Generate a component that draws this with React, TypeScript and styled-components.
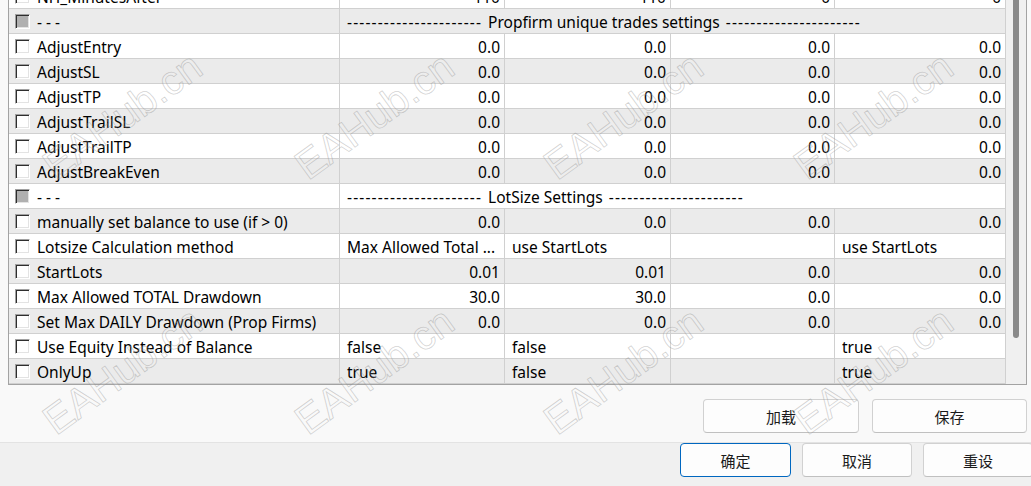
import React from "react";
import styled, { createGlobalStyle } from "styled-components";

const Global = createGlobalStyle`
  html, body { margin: 0; padding: 0; background: #f0f0f0; }
  #root { width: 1031px; height: 486px; }
`;

const Window = styled.div`
  position: relative;
  width: 1031px;
  height: 486px;
  overflow: hidden;
  font-family: "Noto Sans", "Noto Sans CJK SC", sans-serif;
  color: #000;
`;

const Upper = styled.div`
  box-sizing: border-box;
  height: 443px;
  padding: 0 4px 0 8px;
  background: #f9f9f9;
  border-bottom: 1px solid #e3e3e3;
  display: flex;
  flex-direction: column;
`;

const Frame = styled.div`
  margin-top: -17px;
  display: flex;
  border: 1px solid #a3a3a3;
  background: #fff;
`;

const Rows = styled.div`
  width: 997px;
  display: flex;
  flex-direction: column;
`;

const Row = styled.div<{ $alt: boolean }>`
  display: grid;
  grid-template-columns: 331px 165px 166px 164px 171px;
  height: 25px;
  box-sizing: border-box;
  border-bottom: 1px solid #d0d0d0;
  background: ${(p) => (p.$alt ? "#ebebeb" : "#ffffff")};
`;

const Cell = styled.div<{ $right?: boolean; $span?: boolean }>`
  box-sizing: border-box;
  border-right: 1px solid #d0d0d0;
  display: flex;
  align-items: center;
  justify-content: ${(p) => (p.$right ? "flex-end" : "flex-start")};
  padding: 1px 4px 0 7px;
  font-size: 15.5px;
  line-height: 24px;
  white-space: pre;
  overflow: hidden;
  ${(p) => (p.$span ? "grid-column: 2 / 6;" : "")}
`;

const NameCell = styled(Cell)`
  padding-left: 6px;
  gap: 7px;
`;

const Dashes = styled.span`
  letter-spacing: 1.15px;
`;

const Title = styled.span`
  margin: 0 6px 0 6px;
`;

const Check = styled.span<{ $disabled?: boolean }>`
  flex: none;
  box-sizing: border-box;
  width: 15px;
  height: 15px;
  margin-top: -1px;
  border: 1px solid;
  border-color: #a0a0a0 #ffffff #ffffff #a0a0a0;
  box-shadow: inset 1px 1px 0 #2e2e2e, inset -1px -1px 0 #e3e3e3;
  background: ${(p) => (p.$disabled ? "#b0b0b0" : "#ffffff")};
`;

const Scrollbar = styled.div`
  width: 20px;
  box-sizing: border-box;
  background: #f0f0f0;
  display: flex;
  padding-left: 7px;
`;

const Thumb = styled.div`
  width: 6px;
  height: 354px;
  background: #8a8a8a;
  border-radius: 0 0 3px 3px;
`;

const UpperButtons = styled.div`
  display: flex;
  justify-content: flex-end;
  gap: 13px;
  margin-top: 14px;
`;

const Button = styled.button<{ $w: number; $primary?: boolean }>`
  box-sizing: border-box;
  width: ${(p) => p.$w}px;
  height: 34px;
  border-radius: 4px;
  border: 1px solid ${(p) => (p.$primary ? "#0067c0" : "#d1d1d1")};
  border-bottom-color: ${(p) => (p.$primary ? "#0067c0" : "#c0c0c0")};
  background: #fdfdfd;
  font-family: "Noto Sans CJK SC", sans-serif;
  font-size: 15px;
  color: #1b1b1b;
  padding: 0;
  display: flex;
  align-items: center;
  justify-content: center;
`;

const Lower = styled.div`
  display: flex;
  justify-content: flex-end;
  gap: 11px;
  margin-right: -2px;
`;

const Watermark = styled.span`
  position: absolute;
  font-family: "Liberation Sans", sans-serif;
  font-size: 41px;
  line-height: 1;
  color: rgba(255, 255, 255, 0.15);
  -webkit-text-stroke: 0.8px rgba(140, 140, 140, 0.4);
  transform: rotate(-36deg);
  transform-origin: 0 100%;
  pointer-events: none;
  white-space: nowrap;
`;

type DataRow =
  | { kind: "sep"; title: string }
  | { kind: "val"; name: string; vals: string[]; right: boolean };

const z4 = ["0.0", "0.0", "0.0", "0.0"];
const dashes = "----------------------";

const rows: DataRow[] = [
  { kind: "val", name: "NH_MinutesAfter", vals: ["110", "110", "0", "0"], right: true },
  { kind: "sep", title: "Propfirm unique trades settings" },
  { kind: "val", name: "AdjustEntry", vals: z4, right: true },
  { kind: "val", name: "AdjustSL", vals: z4, right: true },
  { kind: "val", name: "AdjustTP", vals: z4, right: true },
  { kind: "val", name: "AdjustTrailSL", vals: z4, right: true },
  { kind: "val", name: "AdjustTrailTP", vals: z4, right: true },
  { kind: "val", name: "AdjustBreakEven", vals: z4, right: true },
  { kind: "sep", title: "LotSize Settings" },
  { kind: "val", name: "manually set balance to use (if > 0)", vals: z4, right: true },
  {
    kind: "val",
    name: "Lotsize Calculation method",
    vals: ["Max Allowed Total ...", "use StartLots", "", "use StartLots"],
    right: false,
  },
  { kind: "val", name: "StartLots", vals: ["0.01", "0.01", "0.0", "0.0"], right: true },
  { kind: "val", name: "Max Allowed TOTAL Drawdown", vals: ["30.0", "30.0", "0.0", "0.0"], right: true },
  { kind: "val", name: "Set Max DAILY Drawdown (Prop Firms)", vals: z4, right: true },
  { kind: "val", name: "Use Equity Instead of Balance", vals: ["false", "false", "", "true"], right: false },
  { kind: "val", name: "OnlyUp", vals: ["true", "false", "", "true"], right: false },
];

const marks: [number, number][] = [
  [46, 175], [298, 175], [547, 175], [797, 175],
  [46, 430], [298, 430], [547, 430], [797, 430],
];

export default function App() {
  return (
    <Window>
      <Global />
      <Upper>
        <Frame>
          <Rows>
            {rows.map((r, i) =>
              r.kind === "sep" ? (
                <Row key={i} $alt={i % 2 === 1}>
                  <NameCell>
                    <Check $disabled />
                    - - -
                  </NameCell>
                  <Cell $span>
                    <Dashes>{dashes}</Dashes>
                    <Title>{r.title}</Title>
                    <Dashes>{dashes}</Dashes>
                  </Cell>
                </Row>
              ) : (
                <Row key={i} $alt={i % 2 === 1}>
                  <NameCell>
                    <Check />
                    {r.name}
                  </NameCell>
                  {r.vals.map((v, j) => (
                    <Cell key={j} $right={r.right}>
                      {v}
                    </Cell>
                  ))}
                </Row>
              )
            )}
          </Rows>
          <Scrollbar>
            <Thumb />
          </Scrollbar>
        </Frame>
        <UpperButtons>
          <Button $w={156}>加载</Button>
          <Button $w={155}>保存</Button>
        </UpperButtons>
      </Upper>
      <Lower>
        <Button $w={111} $primary>确定</Button>
        <Button $w={110}>取消</Button>
        <Button $w={110}>重设</Button>
      </Lower>
      {marks.map(([x, y], i) => (
        <Watermark key={i} style={{ left: x + 14, top: y - 29 }}>
          EAHub.cn
        </Watermark>
      ))}
    </Window>
  );
}
